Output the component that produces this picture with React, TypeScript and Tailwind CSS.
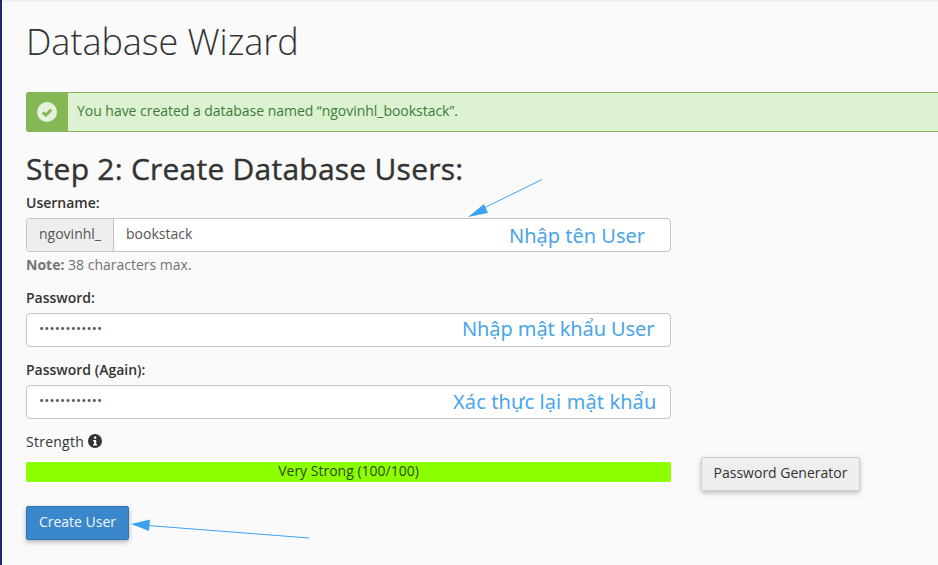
import React from "react";

function Field({ value }: { value: string }) {
  return (
    <div className="flex h-[34px] w-[645px] items-center rounded-[4px] border border-[#c4c4c4] bg-white pb-[3px] pl-3 text-[13.5px] font-medium leading-none tracking-[0.2px] text-[#555]">
      {value}
    </div>
  );
}

function Label({ children }: { children: React.ReactNode }) {
  return <div className="text-[14px] font-semibold leading-[20px] text-[#333]">{children}</div>;
}

export default function App() {
  const annot = "absolute text-[20px] leading-none text-[#4aa5e8] font-['Noto_Sans',sans-serif]";
  return (
    <div className="relative h-[565px] w-[938px] overflow-hidden border-l-2 border-[#1c2a63] bg-[#fafafa] font-['Open_Sans',sans-serif]">
      <div className="h-[2px] bg-[#f0f0f0]" />
      <div className="pl-[24px]">
        <h1 className="mt-[18px] text-[36px] font-light leading-[44px] tracking-[-0.05px] text-[#333]">Database Wizard</h1>
        <div className="mt-[28px] flex h-[40px] w-[1000px] overflow-hidden rounded-[2px] border border-[#7fb556] bg-[#dcf2d0]">
          <div className="flex w-[41px] items-center justify-center bg-[#85b855]">
            <svg width="20" height="20" viewBox="0 0 20 20" className="-ml-[1px]">
              <circle cx="10" cy="10" r="10" fill="#e6f2dd" />
              <path d="M5.8 10.4 L8.8 13.2 L14.2 7.6" fill="none" stroke="#85b855" strokeWidth="3" />
            </svg>
          </div>
          <div className="flex items-center pb-[3px] pl-[9px] text-[14px] tracking-[-0.03px] text-[#3f7a3b]">
            You have created a database named “ngovinhl_bookstack”.
          </div>
        </div>
        <h2 className="mt-[15px] text-[30px] font-medium leading-[44px] tracking-[0.24px] text-[#333] [-webkit-text-stroke:0.4px_#333]">Step 2: Create Database Users:</h2>
        <div className="mt-[2px]">
          <Label>Username:</Label>
          <div className="mt-[5px] flex h-[34px] w-[645px] overflow-hidden rounded-[4px] border border-[#c4c4c4] bg-white text-[14px] text-[#555]">
            <div className="flex w-[87px] items-center justify-center border-r border-[#c4c4c4] bg-[#eeeeee] pb-[3px]">ngovinhl_</div>
            <div className="flex items-center pb-[3px] pl-3">bookstack</div>
          </div>
          <div className="mt-[3px] text-[14px] leading-[20px] text-[#737373]">
            <span className="font-bold">Note:</span> 38 characters max.
          </div>
        </div>
        <div className="mt-[13px]">
          <Label>Password:</Label>
          <div className="mt-[5px]"><Field value="••••••••••••" /></div>
        </div>
        <div className="mt-[13px]">
          <Label>Password (Again):</Label>
          <div className="mt-[5px]"><Field value="••••••••••••" /></div>
        </div>
        <div className="mt-[13px] flex items-center gap-[4px] text-[14px] leading-[20px] tracking-[0.25px] text-[#333]">
          Strength
          <svg width="14" height="14" viewBox="0 0 14 14" className="-mt-[2px]">
            <circle cx="7" cy="7" r="7" fill="#333" />
            <rect x="6" y="2.5" width="2.2" height="2.2" fill="#fff" />
            <path d="M5 6h3.2v4.2h1v1.3H5v-1.3h1V7.3H5z" fill="#fff" />
          </svg>
        </div>
        <div className="mt-[10px] flex items-start">
          <div className="flex h-[20px] w-[645px] items-center justify-center rounded-[2px] bg-[#8cff00] pb-[3px] text-[14px] text-[#2f4a12]">
            Very Strong (100/100)
          </div>
          <button className="ml-[30px] -mt-[5px] flex h-[34px] w-[159px] items-center justify-center rounded-[2px] border border-[#cfcfcf] bg-[#eeeeee] pb-[4px] text-[14px] text-[#333] shadow-[0_2px_5px_rgba(0,0,0,0.25)]">
            Password Generator
          </button>
        </div>
        <button className="mt-[15px] flex h-[34px] w-[103px] items-center justify-center rounded-[2px] border border-[#2f75b5] bg-[#3a87cc] pb-[4px] text-[14px] text-[#f2f7fb] shadow-[0_2px_5px_rgba(0,0,0,0.3)]">
          Create User
        </button>
      </div>

      <div className={annot + " left-[507px] top-[226px]"}>Nhập tên User</div>
      <div className={annot + " left-[460px] top-[319px] tracking-[-0.1px]"}>Nhập mật khẩu User</div>
      <div className={annot + " left-[451px] top-[392px] tracking-[0.1px]"}>Xác thực lại mật khẩu</div>

      <svg className="absolute left-[-2px] top-0" width="938" height="565" viewBox="0 0 938 565">
        <line x1="542" y1="179.5" x2="482" y2="209" stroke="#3fa2f0" strokeWidth="1" />
        <polygon points="468,217 484,204 488,213" fill="#3fa2f0" />
        <line x1="309" y1="538" x2="148" y2="525.5" stroke="#3fa2f0" strokeWidth="1" />
        <polygon points="131,524 150,519.5 149,531" fill="#3fa2f0" />
      </svg>
    </div>
  );
}
